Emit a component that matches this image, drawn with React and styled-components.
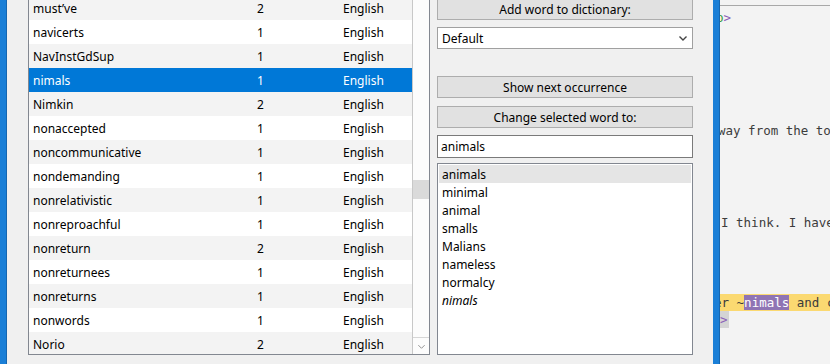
import styled, { createGlobalStyle } from "styled-components";

const GlobalStyle = createGlobalStyle`
  html, body {
    margin: 0;
    padding: 0;
    background: #f0f0f0;
    overflow: hidden;
  }
  body {
    font-family: "Noto Sans", "Open Sans", sans-serif;
    font-size: 12px;
    color: #000;
  }
`;

const words = [
  ["must’ve", 2],
  ["navicerts", 1],
  ["NavInstGdSup", 1],
  ["nimals", 1],
  ["Nimkin", 2],
  ["nonaccepted", 1],
  ["noncommunicative", 1],
  ["nondemanding", 1],
  ["nonrelativistic", 1],
  ["nonreproachful", 1],
  ["nonreturn", 2],
  ["nonreturnees", 1],
  ["nonreturns", 1],
  ["nonwords", 1],
  ["Norio", 2],
];

const suggestions = [
  "animals",
  "minimal",
  "animal",
  "smalls",
  "Malians",
  "nameless",
  "normalcy",
];

const Window = styled.div`
  display: flex;
  width: 830px;
  height: 364px;
  overflow: hidden;
  background: #f0f0f0;
`;

const AccentBar = styled.div`
  width: ${({ w }) => w}px;
  flex: none;
  background: #1a7fd7;
  border-right: 1px solid #1566b0;
  box-sizing: border-box;
`;

const Dialog = styled.div`
  display: flex;
  gap: 7px;
  padding-left: 21px;
  width: 706px;
  box-sizing: border-box;
  flex: none;
`;

const WordList = styled.div`
  width: 402px;
  height: 355px;
  border: 1px solid #828790;
  border-top: none;
  box-sizing: border-box;
  background: #fff;
  display: flex;
  overflow: hidden;
`;

const Rows = styled.div`
  flex: 1;
  margin-top: -4px;
`;

const Row = styled.div`
  display: grid;
  grid-template-columns: 224px 86px 1fr;
  height: 24px;
  align-items: center;
  padding-left: 4px;
  background: ${({ selected, odd }) =>
    selected ? "#0078d7" : odd ? "#fff" : "#f3f3f3"};
  color: ${({ selected }) => (selected ? "#fff" : "#000")};
`;

const Scrollbar = styled.div`
  width: 16px;
  flex: none;
  border-left: 1px solid #c8c8c8;
  background: #fcfcfc;
  display: flex;
  flex-direction: column;
`;

const Track = styled.div`
  flex: 1;
  padding-top: 180px;
`;

const Thumb = styled.div`
  height: 19px;
  background: #dadada;
`;

const ArrowBox = styled.div`
  height: 16px;
  border-top: 1px solid #d6d6d6;
  display: flex;
  align-items: center;
  justify-content: center;
`;

const Side = styled.div`
  width: 256px;
  display: flex;
  flex-direction: column;
`;

const Button = styled.div`
  height: 22px;
  flex: none;
  box-sizing: border-box;
  border: 1px solid #adadad;
  background: #e1e1e1;
  display: flex;
  align-items: center;
  justify-content: center;
  margin-top: ${({ mt }) => mt}px;
`;

const Select = styled.div`
  height: 22px;
  flex: none;
  margin-top: 7px;
  box-sizing: border-box;
  border: 1px solid #a0a0a0;
  background: #fff;
  display: flex;
  align-items: center;
  justify-content: space-between;
  padding: 0 4px 0 4px;
`;

const Input = styled.div`
  height: 23px;
  flex: none;
  margin-top: 7px;
  box-sizing: border-box;
  border: 1px solid #7a7a7a;
  background: #fff;
  display: flex;
  align-items: center;
  padding-left: 3px;
`;

const SuggestBox = styled.div`
  height: 192px;
  flex: none;
  margin-top: 5px;
  box-sizing: border-box;
  border: 1px solid #828790;
  background: #fff;
  padding: 1px;
`;

const Suggestion = styled.div`
  height: 18px;
  display: flex;
  align-items: center;
  padding-left: 3px;
  background: ${({ active }) => (active ? "#e5e5e5" : "transparent")};
  font-style: ${({ italic }) => (italic ? "italic" : "normal")};
`;

const Editor = styled.div`
  flex: 1;
  background: #f3f3f3;
  overflow: hidden;
  font-family: "DejaVu Sans Mono", monospace;
  font-size: 12.5px;
  color: #3c3c3c;
  white-space: nowrap;
`;

const EditorRule = styled.div`
  height: 5px;
  border-bottom: 1px solid #a8a8a8;
`;

const Line = styled.div`
  height: 17px;
  line-height: 17px;
  margin-top: ${({ mt }) => mt || 0}px;
  margin-left: ${({ ml }) => ml || 0}px;
`;

const Tag = styled.span`
  color: ${({ green }) => (green ? "#3a9a3a" : "#8c5fb8")};
`;

const Marked = styled.span`
  background: #fbd971;
  display: inline-block;
  width: 200px;
`;

const Misspelled = styled.span`
  background: #8f74b4;
  color: #fff;
`;

const GreyBox = styled.span`
  background: #d4d4d4;
  display: inline-block;
  width: 9px;
  color: #8c5fb8;
`;

const Chevron = ({ size = 10, color = "#555", width = 1.3 }) => (
  <svg width={size} height={size} viewBox="0 0 10 10">
    <path d="M1.5 3.5 L5 7 L8.5 3.5" fill="none" stroke={color} strokeWidth={width} />
  </svg>
);

export default function App() {
  return (
    <Window>
      <GlobalStyle />
      <AccentBar w={7} />
      <Dialog>
        <WordList>
          <Rows>
            {words.map(([w, n], i) => (
              <Row key={w} odd={i % 2 === 1} selected={w === "nimals"}>
                <span>{w}</span>
                <span>{n}</span>
                <span>English</span>
              </Row>
            ))}
          </Rows>
          <Scrollbar>
            <Track>
              <Thumb />
            </Track>
            <ArrowBox>
              <Chevron size={9} color="#888" width={1} />
            </ArrowBox>
          </Scrollbar>
        </WordList>
        <Side>
          <Button mt={-2}>Add word to dictionary:</Button>
          <Select>
            <span>Default</span>
            <Chevron size={10} color="#444" width={1.4} />
          </Select>
          <Button mt={27}>Show next occurrence</Button>
          <Button mt={8}>Change selected word to:</Button>
          <Input>animals</Input>
          <SuggestBox>
            {suggestions.map((s, i) => (
              <Suggestion key={s} active={i === 0}>
                {s}
              </Suggestion>
            ))}
            <Suggestion italic>nimals</Suggestion>
          </SuggestBox>
        </Side>
      </Dialog>
      <AccentBar w={7} />
      <Editor>
        <EditorRule />
        <Line mt={3} ml={-4}>
          <Tag green>p</Tag>
          <Tag>&gt;</Tag>
        </Line>
        <Line mt={96} ml={-2}>
          way from the to
        </Line>
        <Line mt={75} ml={1}>
          I think. I haven
        </Line>
        <Line mt={63}>
          <Marked>
            <span style={{ marginLeft: -6 }}>er ~</span>
            <Misspelled>nimals</Misspelled> and c
          </Marked>
        </Line>
        <Line>
          <GreyBox>&gt;</GreyBox>
        </Line>
      </Editor>
    </Window>
  );
}
